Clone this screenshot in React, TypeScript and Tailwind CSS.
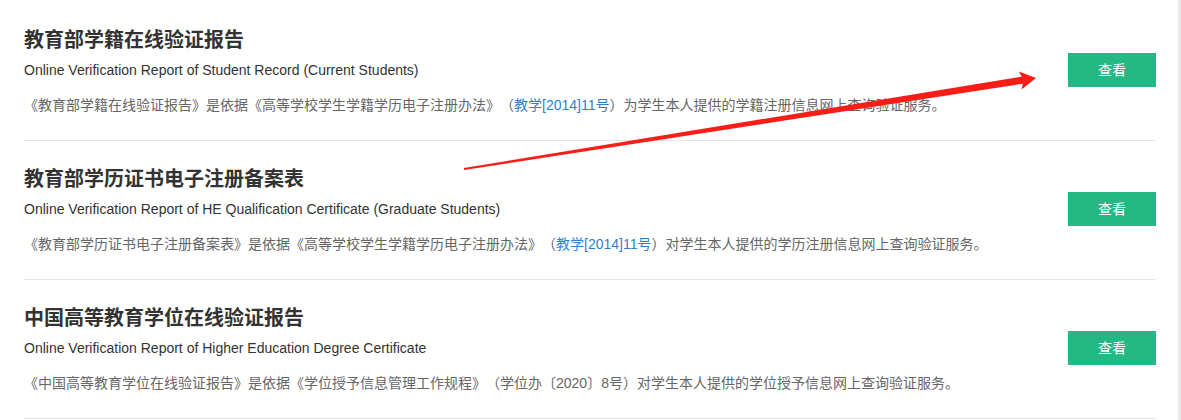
import React from 'react'

type Item = {
	title: string
	subtitle: string
	before: string
	link?: string
	after: string
}

const items: Item[] = [
	{
		title: '教育部学籍在线验证报告',
		subtitle: 'Online Verification Report of Student Record (Current Students)',
		before: '《教育部学籍在线验证报告》是依据《高等学校学生学籍学历电子注册办法》（',
		link: '教学[2014]11号',
		after: '）为学生本人提供的学籍注册信息网上查询验证服务。',
	},
	{
		title: '教育部学历证书电子注册备案表',
		subtitle: 'Online Verification Report of HE Qualification Certificate (Graduate Students)',
		before: '《教育部学历证书电子注册备案表》是依据《高等学校学生学籍学历电子注册办法》（',
		link: '教学[2014]11号',
		after: '）对学生本人提供的学历注册信息网上查询验证服务。',
	},
	{
		title: '中国高等教育学位在线验证报告',
		subtitle: 'Online Verification Report of Higher Education Degree Certificate',
		before: '《中国高等教育学位在线验证报告》是依据《学位授予信息管理工作规程》（学位办〔2020〕8号）对学生本人提供的学位授予信息网上查询验证服务。',
		after: '',
	},
]

function Arrow() {
	// red hand-drawn annotation arrow lying over the list
	return (
		<svg className="pointer-events-none absolute inset-0" width="1181" height="420" viewBox="0 0 1181 420">
			<polygon
				fill="#f81d17"
				points="463.8,168 1021.6,76.7 1018.8,71.6 1036,78 1021.6,89.4 1022.8,83.7 464.2,170"
			/>
		</svg>
	)
}

export default function App() {
	return (
		<div className="relative h-[420px] w-[1181px] overflow-hidden bg-white font-['Liberation_Sans','Noto_Sans_CJK_SC',sans-serif] [text-spacing-trim:space-all]">
			<div className="flex h-full">
				<div className="flex-1 pl-6 pr-[22px] pt-[2px]">
					{items.map((item) => (
						<section key={item.title} className="flex h-[139px] items-start border-b border-[#e5e5e5] pt-[26px]">
							<div className="flex-1">
								<h2 className="text-[20px] font-bold leading-6 text-[#333]">{item.title}</h2>
								<p className="mt-2 text-[14px] leading-5 text-[#333]">{item.subtitle}</p>
								<p className="mt-[15px] text-[14px] leading-5 text-[#666]">
									{item.before}
									{item.link && <span className="text-[#2f7fcf]">{item.link}</span>}
									{item.after}
								</p>
							</div>
							<button className="mt-[25px] h-[34px] w-[88px] bg-[#23b884] text-[14px] text-white">查看</button>
						</section>
					))}
				</div>
				<div className="w-[3px] bg-[#e8e8e8]" />
			</div>
			<Arrow />
		</div>
	)
}
